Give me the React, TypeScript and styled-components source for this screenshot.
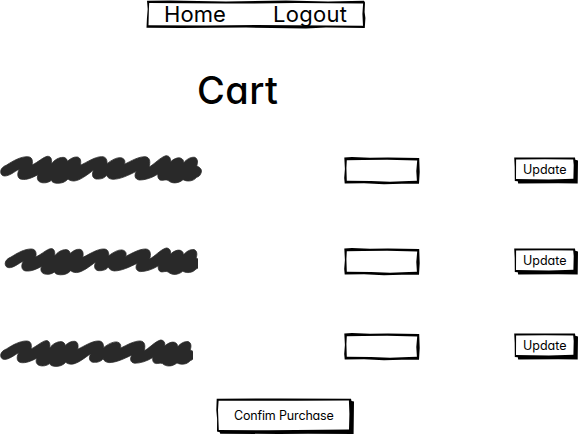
import React from "react";
import styled, { createGlobalStyle } from "styled-components";

const GlobalStyle = createGlobalStyle`
  * { box-sizing: border-box; }
  body {
    margin: 0;
    background: #fff;
    color: #000;
    font-family: Inter, "Liberation Sans", sans-serif;
    font-feature-settings: "cv11" 1, "calt" 0;
    overflow: hidden;
  }
`;

const Page = styled.main`
  width: 578px;
  height: 435px;
  display: flex;
  flex-direction: column;
  overflow: hidden;
`;

const Nav = styled.nav`
  position: relative;
  width: 220px;
  height: 29px;
  margin-left: 146px;
  padding-left: 18px;
  display: flex;
  flex: none;
`;

const Label = styled.span<{ $size: number; $spacing?: number }>`
  position: relative;
  white-space: nowrap;
  font-size: ${(p) => p.$size}px;
  letter-spacing: ${(p) => p.$spacing ?? 0}px;
  line-height: 1;
`;

const NavLink = styled(Label)`
  flex: none;
  width: 109px;
  margin-top: 3px;
`;

const Title = styled.h1`
  margin: 42px 0 0 197px;
  height: 86px;
  flex: none;
  font-size: 38px;
  font-weight: 500;
  line-height: 1;
  letter-spacing: 0.4px;
`;

const Items = styled.section`
  display: grid;
  grid-template-rows: 91px 85px 41px;
  flex: none;
  height: 242px;
`;

const Item = styled.div`
  display: grid;
  grid-template-columns: 344px 170px 64px;
  align-items: start;
`;

const Ink = styled.svg`
  display: block;
  overflow: hidden;
  margin-top: -3px;
`;

const Field = styled.div`
  position: relative;
  width: 76px;
  height: 28px;
`;

const Button = styled.button<{ $w: number; $h: number; $left: number; $top: number }>`
  position: relative;
  display: flex;
  flex-direction: column;
  justify-content: flex-start;
  align-items: flex-start;
  width: ${(p) => p.$w}px;
  height: ${(p) => p.$h}px;
  padding: ${(p) => p.$top}px 0 0 ${(p) => p.$left}px;
  border: 0;
  background: none;
  color: #000;
  font: inherit;
  font-feature-settings: inherit;
`;

const Confirm = styled.div`
  margin-left: 216px;
`;

const Frame = styled.svg`
  position: absolute;
  inset: 0;
  overflow: visible;
`;

function NavFrame() {
  return (
    <Frame width="220" height="29">
      <path fillRule="evenodd" d="M1 .7 L24 .5 80 1.5 140 .6 182 1.5 218 .8 219 2.5 218.6 12 219.4 18 218.8 28 180 27.6 160 28.5 100 27.6 35 28 .5 27.7 .9 19 1.7 9Z M3.2 3 L2.9 9 2.5 25.2 60 25.6 110 24.9 217 25.7 216.4 14 217.1 3.5 150 3.1 80 3.6Z" />
    </Frame>
  );
}

function FieldFrame() {
  return (
    <Frame width="76" height="28">
      <path fillRule="evenodd" d="M.3 .5 L8 .1 26 .7 44 .4 75.2 1 75.7 15 75 26.7 58 26.7 40 27.2 20 26.2 .7 26.5 .2 21 .9 12Z M2.8 3.2 L2.4 11 2.8 23.8 27 23.9 46 24.8 65 24 72.9 23.8 72.3 14 73.2 3.4 43 2.7 19 2.9Z" />
    </Frame>
  );
}

function UpdateFrame() {
  return (
    <Frame width="64" height="28">
      <path fillRule="evenodd" d="M.2 .5 L61 .6 61.3 2.8 64 3.4 63.7 26.5 44 26.2 4.2 26.5 3.8 24.3 .8 24 .7 10Z M2.1 2.6 L2 22 35 22.4 59.4 21.8 59.7 8 59.2 2.6 31 2.2Z" />
    </Frame>
  );
}

function ConfirmFrame() {
  return (
    <Frame width="138" height="36">
      <path fillRule="evenodd" d="M.7 -.3 L64 -.6 135 -.3 135.5 2 138 2.6 137.6 35.1 92 34.7 63 35 4.2 34.7 3.8 33.2 1 32.4 1.1 20 .3 11Z M2.6 1.7 L2 11 2.8 30.9 53 31.3 133 30.4 133.4 15 132.9 1.6 80 1.7Z" />
    </Frame>
  );
}

const scribble =
  "M2 65 C2 55 12 48 20 45 C40 32 62 20 82 20 C95 20 100 30 96 45 C115 36 130 21 142 19 C152 18 157 27 154 42 C164 29 176 22 190 22 C198 23 202 29 202 34 C212 25 222 20 232 21 C242 23 244 34 241 46 C262 36 285 20 305 20 C316 20 322 26 321 41 C335 30 350 22 362 23 C374 25 377 34 373 43 C395 32 415 20 435 20 C450 21 452 36 447 51 C462 44 480 22 498 17 C510 17 513 28 511 36 C522 26 532 22 541 24 C550 27 552 34 550 39 C560 28 572 20 584 22 C594 26 594 38 590 48 C600 52 606 58 604 66 C601 78 595 80 590 82 C580 94 562 96 549 89 C535 101 515 102 504 91 C496 88 491 91 485 91 C476 91 472 82 474 72 C455 84 435 90 418 90 C404 88 402 76 409 64 C385 76 360 88 338 88 C328 87 322 82 320 76 C312 86 300 88 288 87 C276 84 275 72 281 60 C262 74 240 92 222 93 C212 93 208 90 204 87 C195 97 185 100 172 100 C160 99 156 96 154 91 C145 99 130 100 122 97 C112 93 110 84 114 74 C95 84 80 90 65 88 C52 86 50 72 58 57 C42 66 28 78 14 78 C6 78 2 72 2 65Z";

interface LineItem {
  width: number;
  shift: number;
  scale: number;
  stretch: number;
  drop: number;
}

const items: LineItem[] = [
  { width: 205, shift: 0, scale: 1, stretch: 1, drop: -4 },
  { width: 198, shift: 4.5, scale: 0.974, stretch: 0.97, drop: -2.5 },
  { width: 193, shift: 0, scale: 0.967, stretch: 0.955, drop: 4.6 },
];

export default function App() {
  return (
    <>
      <GlobalStyle />
      <Page>
        <Nav>
          <NavFrame />
          <NavLink $size={22} $spacing={0.1}>Home</NavLink>
          <NavLink $size={22} $spacing={0.3}>Logout</NavLink>
        </Nav>
        <Title>Cart</Title>
        <Items>
          {items.map((item, i) => (
            <Item key={i}>
              <Ink width={item.width} height="42">
                <g transform={`translate(${item.shift} ${item.drop}) scale(${item.scale / 3} ${item.stretch / 3})`}>
                  <path d={scribble} fill="#292929" stroke="#292929" strokeWidth="2.4" strokeLinejoin="round" />
                </g>
              </Ink>
              <Field>
                <FieldFrame />
              </Field>
              <Button $w={64} $h={28} $left={9} $top={7}>
                <UpdateFrame />
                <Label $size={12.5}>Update</Label>
              </Button>
            </Item>
          ))}
        </Items>
        <Confirm>
          <Button $w={138} $h={36} $left={18} $top={11}>
            <ConfirmFrame />
            <Label $size={12.5} $spacing={-0.16}>Confim Purchase</Label>
          </Button>
        </Confirm>
      </Page>
    </>
  );
}
